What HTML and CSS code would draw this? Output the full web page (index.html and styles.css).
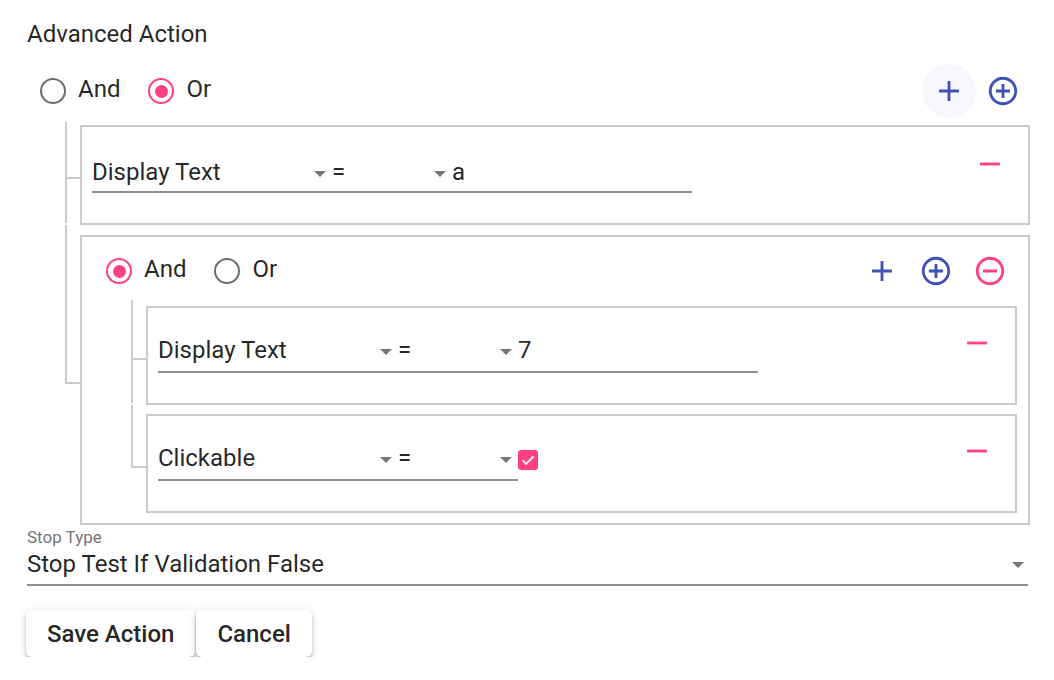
FILE: index.html
```html
<!DOCTYPE html>
<html lang="en">
<head>
<meta charset="utf-8">
<title>Advanced Action</title>
<link rel="stylesheet" href="styles.css">
</head>
<body>
<div class="page">
  <h1 class="title">Advanced Action</h1>

  <div class="group root">
    <div class="group-head">
      <div class="radios">
        <label class="radio"><span class="radio-ring"></span><span class="radio-label">And</span></label>
        <label class="radio checked"><span class="radio-ring"></span><span class="radio-label">Or</span></label>
      </div>
      <div class="actions">
        <button class="icon-btn hover blue" type="button"><svg viewBox="0 0 24 24"><path d="M19 13h-6v6h-2v-6H5v-2h6V5h2v6h6v2z"/></svg></button>
        <button class="icon-btn blue" type="button"><svg viewBox="0 0 24 24"><path d="M13 7h-2v4H7v2h4v4h2v-4h4v-2h-4V7zm-1-5C6.48 2 2 6.48 2 12s4.48 10 10 10 10-4.48 10-10S17.52 2 12 2zm0 18c-4.41 0-8-3.59-8-8s3.59-8 8-8 8 3.59 8 8-3.59 8-8 8z"/></svg></button>
      </div>
    </div>

    <div class="children root-children">
      <div class="node rule top-rule">
        <div class="fields">
          <div class="field select">Display Text<span class="arrow"></span></div>
          <div class="field select op">=<span class="arrow"></span></div>
          <div class="field input">a</div>
        </div>
        <button class="icon-btn pink" type="button"><svg viewBox="0 0 24 24"><path d="M19 13H5v-2h14v2z"/></svg></button>
      </div>

      <div class="node group box">
        <div class="group-head">
          <div class="radios">
            <label class="radio checked"><span class="radio-ring"></span><span class="radio-label">And</span></label>
            <label class="radio"><span class="radio-ring"></span><span class="radio-label">Or</span></label>
          </div>
          <div class="actions">
            <button class="icon-btn blue" type="button"><svg viewBox="0 0 24 24"><path d="M19 13h-6v6h-2v-6H5v-2h6V5h2v6h6v2z"/></svg></button>
            <button class="icon-btn blue" type="button"><svg viewBox="0 0 24 24"><path d="M13 7h-2v4H7v2h4v4h2v-4h4v-2h-4V7zm-1-5C6.48 2 2 6.48 2 12s4.48 10 10 10 10-4.48 10-10S17.52 2 12 2zm0 18c-4.41 0-8-3.59-8-8s3.59-8 8-8 8 3.59 8 8-3.59 8-8 8z"/></svg></button>
            <button class="icon-btn pink" type="button"><svg viewBox="0 0 24 24"><path d="M7 11v2h10v-2H7zm5-9C6.48 2 2 6.48 2 12s4.48 10 10 10 10-4.48 10-10S17.52 2 12 2zm0 18c-4.41 0-8-3.59-8-8s3.59-8 8-8 8 3.59 8 8-3.59 8-8 8z"/></svg></button>
          </div>
        </div>

        <div class="children inner-children">
          <div class="node rule">
            <div class="fields">
              <div class="field select">Display Text<span class="arrow"></span></div>
              <div class="field select op">=<span class="arrow"></span></div>
              <div class="field input">7</div>
            </div>
            <button class="icon-btn pink" type="button"><svg viewBox="0 0 24 24"><path d="M19 13H5v-2h14v2z"/></svg></button>
          </div>
          <div class="node rule">
            <div class="fields">
              <div class="field select">Clickable<span class="arrow"></span></div>
              <div class="field select op">=<span class="arrow"></span></div>
              <div class="check-wrap"><span class="checkbox"><svg viewBox="0 0 20 20"><polyline points="4.5,10.2 8.2,13.8 15.5,6.5"/></svg></span></div>
            </div>
            <button class="icon-btn pink" type="button"><svg viewBox="0 0 24 24"><path d="M19 13H5v-2h14v2z"/></svg></button>
          </div>
        </div>
      </div>
    </div>
  </div>

  <div class="stop">
    <div class="stop-label">Stop Type</div>
    <div class="stop-select">Stop Test If Validation False<span class="arrow"></span></div>
  </div>

  <div class="buttons">
    <button class="btn" type="button">Save Action</button>
    <button class="btn" type="button">Cancel</button>
  </div>
</div>
</body>
</html>
```

FILE: styles.css
```css
body {
  margin: 0;
  font-family: Roboto, "Liberation Sans", sans-serif;
  color: rgba(0, 0, 0, 0.87);
  background: #fff;
}

.page {
  padding: 20px 24px 0 27px;
}

.title {
  margin: 0;
  font-size: 24px;
  font-weight: 400;
  line-height: 28px;
}

.group.root {
  margin-top: 16px;
  padding-left: 13px;
}

.group-head {
  display: flex;
  align-items: center;
  justify-content: space-between;
  height: 54px;
}

.radios {
  display: flex;
  align-items: center;
}

.radio {
  display: flex;
  align-items: center;
  margin-right: 28px;
  font-size: 24px;
  line-height: 28px;
}

.radio-ring {
  width: 26px;
  height: 26px;
  box-sizing: border-box;
  border: 2px solid #6e6e6e;
  border-radius: 50%;
  margin-right: 12px;
  display: flex;
  align-items: center;
  justify-content: center;
}

.radio.checked .radio-ring {
  border-color: #ff4081;
}

.radio.checked .radio-ring::after {
  content: "";
  width: 13px;
  height: 13px;
  border-radius: 50%;
  background: #ff4081;
}

.radio-label {
  padding-bottom: 4px;
}

.actions {
  display: flex;
}

.icon-btn {
  width: 54px;
  height: 54px;
  border: 0;
  padding: 0;
  background: none;
  border-radius: 50%;
  display: flex;
  align-items: center;
  justify-content: center;
  flex: none;
}

.icon-btn svg {
  width: 34px;
  height: 34px;
}

.icon-btn.hover {
  background: #f6f7fc;
}

.icon-btn.blue svg {
  fill: #3f51b5;
}

.icon-btn.pink svg {
  fill: #ff4081;
}

.children {
  display: flex;
  flex-direction: column;
  margin-left: 40px;
}

.root-children {
  margin-top: 7px;
  gap: 10px;
}

.inner-children {
  margin-top: 8px;
  gap: 9px;
}

/* tree connectors */
.node {
  position: relative;
}

.node::before {
  content: "";
  position: absolute;
  left: -17px;
  width: 2px;
  bottom: 0;
  background: #cbcbcb;
}

.node::after {
  content: "";
  position: absolute;
  left: -17px;
  width: 15px;
  height: 2px;
  top: calc(50% + 2px);
  background: #cbcbcb;
}

.root-children > .node::before {
  top: -12px;
}

.root-children > .node:first-child::before {
  top: -5px;
}

.inner-children > .node::before {
  top: -11px;
}

.inner-children > .node:first-child::before {
  top: -8px;
}

.children > .node:last-child::before {
  bottom: calc(50% - 4px);
}

.box {
  border: 2px solid #cbcbcb;
  padding: 7px 11px 10px 24px;
}

.rule {
  box-sizing: border-box;
  height: 99px;
  border: 2px solid #cbcbcb;
  padding: 0 11px 0 10px;
  display: flex;
  justify-content: space-between;
  align-items: flex-start;
}

.rule .icon-btn {
  margin-top: 8px;
}

.rule.top-rule {
  height: 100px;
}

.rule.top-rule .icon-btn {
  margin-top: 10px;
}

.fields {
  display: flex;
  align-items: flex-start;
  margin-top: 28px;
}

.top-rule .fields {
  margin-top: 31px;
}

.field {
  box-sizing: border-box;
  height: 37px;
  padding-bottom: 7px;
  border-bottom: 2px solid #8f8f8f;
  font-size: 24px;
  line-height: 28px;
  white-space: nowrap;
  position: relative;
}

.top-rule .field {
  height: 35px;
  padding-bottom: 5px;
}

.select {
  width: 240px;
}

.select.op {
  width: 120px;
}

.input {
  width: 240px;
}

.arrow {
  position: absolute;
  right: 6px;
  top: 13px;
  width: 0;
  height: 0;
  border-left: 6px solid transparent;
  border-right: 6px solid transparent;
  border-top: 6px solid #757575;
}

.check-wrap {
  height: 28px;
  display: flex;
  align-items: flex-start;
}

.checkbox {
  margin-top: 6px;
  width: 20px;
  height: 20px;
  border-radius: 3px;
  background: #ff4081;
  display: flex;
}

.checkbox svg {
  width: 20px;
  height: 20px;
  fill: none;
  stroke: #fff;
  stroke-width: 1.8;
}

.stop {
  margin-top: 2px;
  margin-right: 2px;
}

.stop-label {
  font-size: 17px;
  line-height: 20px;
  color: #757575;
}

.stop-select {
  margin-top: 3px;
  position: relative;
  font-size: 24px;
  line-height: 28px;
  padding-bottom: 6px;
  border-bottom: 2px solid #8f8f8f;
}

.stop-select .arrow {
  right: 4px;
  top: 12px;
}

.buttons {
  display: flex;
  gap: 1px;
  margin-top: 24px;
  margin-left: -1px;
}

.btn {
  height: 47px;
  padding: 0 21px;
  border: 0;
  border-radius: 6px;
  background: #fff;
  font-family: Roboto, "Liberation Sans", sans-serif;
  font-size: 24px;
  font-weight: 500;
  color: rgba(0, 0, 0, 0.87);
  box-shadow: 0 3px 3px -2px rgba(0, 0, 0, 0.28), 0 3px 4px 0 rgba(0, 0, 0, 0.16), 0 1px 8px 0 rgba(0, 0, 0, 0.12);
}
```
